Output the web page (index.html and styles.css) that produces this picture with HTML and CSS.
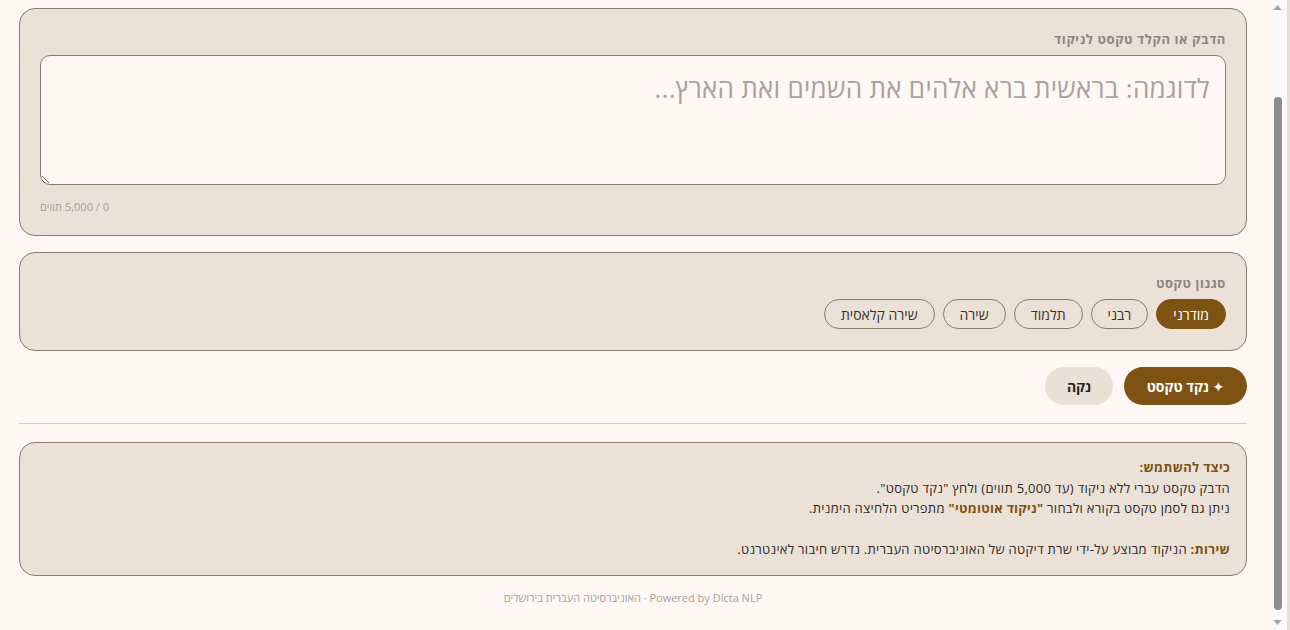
FILE: index.html
```html
<!DOCTYPE html>
<html lang="he" dir="rtl">
<head>
<meta charset="utf-8">
<title>ניקוד</title>
<link rel="stylesheet" href="styles.css">
</head>
<body>
<main class="page">
  <section class="card card-input">
    <label class="label" for="src">הדבק או הקלד טקסט לניקוד</label>
    <textarea id="src" class="input" placeholder="לדוגמה: בראשית ברא אלהים את השמים ואת הארץ..."></textarea>
    <div class="counter">0 / 5,000 תווים</div>
  </section>

  <section class="card card-style">
    <div class="label">סגנון טקסט</div>
    <div class="chips">
      <button class="chip chip-active">מודרני</button>
      <button class="chip">רבני</button>
      <button class="chip">תלמוד</button>
      <button class="chip">שירה</button>
      <button class="chip">שירה קלאסית</button>
    </div>
  </section>

  <div class="actions">
    <button class="btn btn-primary">✦ נקד טקסט</button>
    <button class="btn btn-secondary">נקה</button>
  </div>

  <hr class="divider">

  <section class="card card-info">
    <p class="info-line"><strong class="accent">כיצד להשתמש:</strong></p>
    <p class="info-line">הדבק טקסט עברי ללא ניקוד (עד 5,000 תווים) ולחץ "נקד טקסט".</p>
    <p class="info-line">ניתן גם לסמן טקסט בקורא ולבחור <strong class="accent">"ניקוד אוטומטי"</strong> מתפריט הלחיצה הימנית.</p>
    <p class="info-line">&nbsp;</p>
    <p class="info-line"><strong class="accent">שירות:</strong> הניקוד מבוצע על-ידי שרת דיקטה של האוניברסיטה העברית. נדרש חיבור לאינטרנט.</p>
  </section>

  <footer class="footer">Powered by Dicta NLP · האוניברסיטה העברית בירושלים</footer>
</main>

<div class="scrollbar" aria-hidden="true">
  <svg class="sb-arrow sb-up" width="15" height="15" viewBox="0 0 15 15"><path d="M3.5 10 L7.5 5 L11.5 10 Z" fill="#a3a3a3"/></svg>
  <div class="sb-track"><div class="sb-thumb"></div></div>
  <svg class="sb-arrow sb-down" width="15" height="15" viewBox="0 0 15 15"><path d="M3.5 5 L7.5 10 L11.5 5 Z" fill="#a3a3a3"/></svg>
</div>
<div class="edge" aria-hidden="true"></div>
</body>
</html>
```

FILE: styles.css
```css
* { box-sizing: border-box; }

html, body {
  margin: 0;
  padding: 0;
  background: #fff7f4;
}

body {
  font-family: "Open Sans", "DejaVu Sans", sans-serif;
  color: #2e2a26;
}

.page {
  padding: 8px 43px 20px 19px;
  display: flex;
  flex-direction: column;
}

.card {
  background: #ece1d6;
  border: 1px solid #8a7b6b;
  border-radius: 16px;
  padding: 22px 20px 20px;
}

.label {
  display: block;
  font-size: 13px;
  line-height: 16px;
  font-weight: 700;
  letter-spacing: 0.6px;
  color: #8a8581;
  margin-bottom: 8px;
}

.input {
  display: block;
  width: 100%;
  height: 130px;
  background: #fff7f4;
  border: 1px solid #8a7b6b;
  border-radius: 10px;
  padding: 14px 15px;
  font-family: "Open Sans", "DejaVu Sans", sans-serif;
  font-size: 26px;
  letter-spacing: 0.3px;
  color: #333;
  resize: vertical;
  outline: none;
}

.input::placeholder {
  color: #a6a29e;
}

.counter {
  margin-top: 14px;
  font-size: 11px;
  line-height: 16px;
  color: #a59d94;
  text-align: left;
}

.card-style {
  margin-top: 16px;
  padding-bottom: 21px;
}

.chips {
  display: flex;
  gap: 8px;
}

.chip {
  height: 30px;
  padding: 0 16px;
  border-radius: 999px;
  border: 1px solid #8a7b6b;
  background: transparent;
  font-family: "Open Sans", "DejaVu Sans", sans-serif;
  font-size: 14px;
  color: #3a342e;
  cursor: pointer;
}

.chip-active {
  background: #7d5213;
  border-color: #7d5213;
  color: #fff;
}

.actions {
  margin-top: 16px;
  display: flex;
  gap: 11px;
}

.btn {
  height: 38px;
  border: none;
  border-radius: 999px;
  font-family: "Open Sans", "DejaVu Sans", sans-serif;
  font-size: 14px;
  font-weight: 700;
  cursor: pointer;
}

.btn-primary {
  background: #7d5213;
  color: #fff;
  padding: 0 20px;
  width: 123px;
}

.btn-secondary {
  background: #ebe0d5;
  color: #2a2420;
  padding: 0 20px;
  width: 68px;
}

.divider {
  margin: 18px 0 18px;
  border: none;
  border-top: 1px solid #d9c9c0;
}

.card-info {
  padding: 14px 16px 15px;
}

.info-line {
  margin: 0;
  font-size: 13px;
  line-height: 20.5px;
  letter-spacing: 0.3px;
  color: #2e2a26;
}

.accent {
  color: #7d5213;
  font-weight: 700;
}

.footer {
  margin-top: 15px;
  text-align: center;
  font-size: 11px;
  line-height: 14px;
  color: #a8a09a;
}

/* decorative window scrollbar and panel edge */
.scrollbar {
  position: fixed;
  top: 0;
  bottom: 0;
  right: 5px;
  width: 15px;
  background: #fafafa;
  display: flex;
  flex-direction: column;
}

.sb-arrow {
  display: block;
  flex: none;
}

.sb-track {
  flex: 1;
  display: flex;
  flex-direction: column;
  justify-content: flex-end;
  padding: 0 3px 5px 4px;
}

.sb-thumb {
  height: 513px;
  background: #8d8d8d;
  border-radius: 4px;
}

.edge {
  position: fixed;
  top: 0;
  bottom: 0;
  right: 0;
  width: 3px;
  background: #eadfd3;
}
```
